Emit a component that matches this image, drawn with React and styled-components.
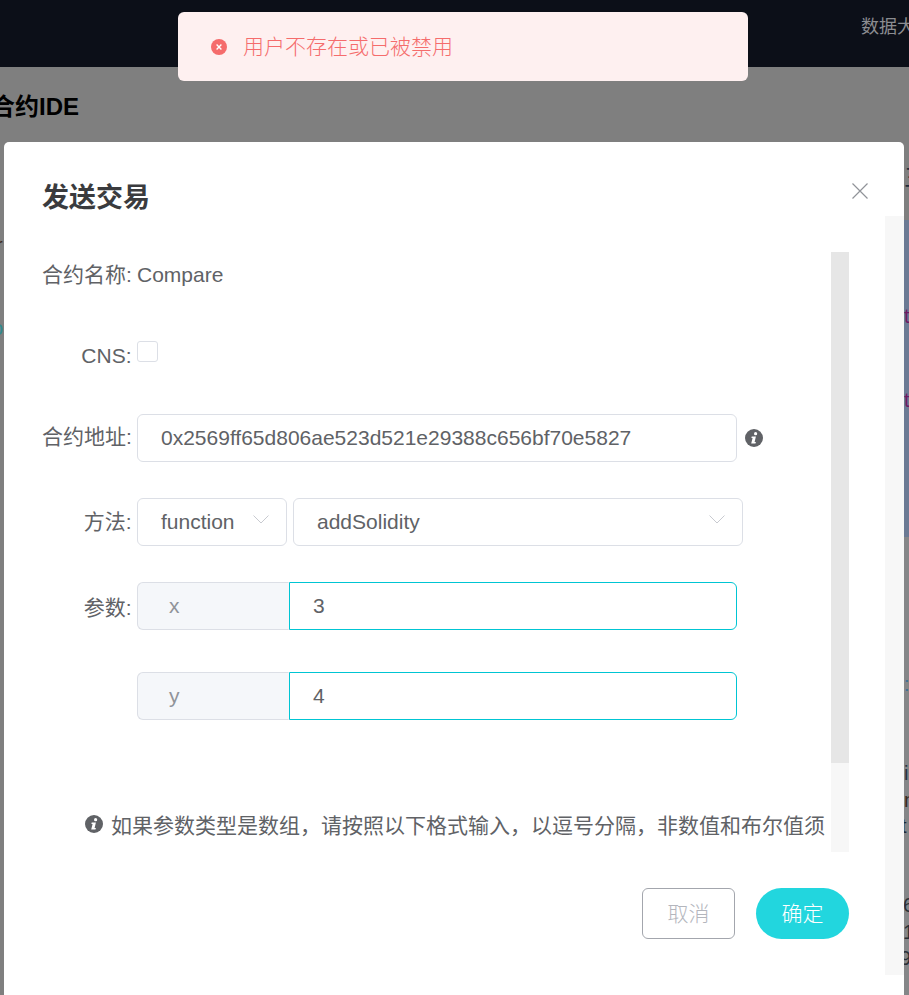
import React from 'react';
import styled, { createGlobalStyle } from 'styled-components';

const FONT = `"Liberation Sans", "Noto Sans CJK SC", sans-serif`;
const THIN_FONT = `"Noto Sans CJK SC", serif`;

const backdropGlyphs = [
  { x: 904, y: 168, text: '三', color: '#1f2a3a', size: 24 },
  { x: 904, y: 306, text: 't', color: '#6d1a63' },
  { x: 904, y: 390, text: 't', color: '#6d1a63' },
  { x: 904, y: 674, text: ':', color: '#3f6d94' },
  { x: 904, y: 763, text: 'i', color: '#26323f' },
  { x: 904, y: 790, text: 'n', color: '#3a2a1e' },
  { x: 901, y: 816, text: 't', color: '#1f2a36' },
  { x: 903, y: 895, text: '6', color: '#2b2f36' },
  { x: 903, y: 922, text: '1', color: '#2b2f36' },
  { x: 900, y: 948, text: '9', color: '#2b2f36' },
  { x: -4, y: 235, text: 'r', color: '#3a2a1e' },
  { x: -8, y: 318, text: 'o', color: '#2f8a8f' },
];

const GlobalStyle = createGlobalStyle`
  html, body {
    margin: 0;
    padding: 0;
    height: 995px;
    overflow: hidden;
    font-family: ${FONT};
  }
  * { box-sizing: border-box; }
`;

const Page = styled.div`
  position: relative;
  width: 909px;
  height: 995px;
  overflow: hidden;
  background: #7f7f7f;
`;

const TopBar = styled.div`
  height: 67px;
  background: #0c0f18;
  padding: 15px 0 0 861px;
  color: #8b8c90;
  font-size: 18px;
  line-height: 24px;
  white-space: nowrap;
  overflow: hidden;
`;

const PageTitle = styled.h1`
  margin: 25px 0 0 -9px;
  font-size: 24px;
  line-height: 30px;
  font-weight: 700;
  color: #000;
  white-space: nowrap;
`;

const BackdropStrip = styled.div`
  position: absolute;
  left: 904px;
  top: ${p => p.$top}px;
  width: 5px;
  height: ${p => p.$height}px;
  background: ${p => p.$color};
`;

const BackdropGlyph = styled.span`
  position: absolute;
  left: ${p => p.$x}px;
  top: ${p => p.$y}px;
  font-size: ${p => p.$size ?? 20}px;
  line-height: 20px;
  color: ${p => p.$color};
`;

const Toast = styled.div`
  position: absolute;
  z-index: 3;
  left: 178px;
  top: 12px;
  width: 570px;
  height: 69px;
  display: flex;
  align-items: center;
  gap: 16px;
  padding-left: 33px;
  background: #fef0f0;
  border-radius: 6px;
  color: #f56c6c;
  font-size: 21px;
  font-weight: 300;
  font-family: ${THIN_FONT};
`;

const ToastText = styled.span`
  margin-bottom: 4px;
`;

const Modal = styled.section`
  position: absolute;
  z-index: 2;
  left: 4px;
  top: 142px;
  width: 900px;
  height: 860px;
  background: #fff;
  border-radius: 5px 5px 0 0;
`;

const ModalHeader = styled.header`
  display: flex;
  justify-content: space-between;
  padding: 38px 33px 0 38px;
  height: 110px;
`;

const ModalTitle = styled.h2`
  margin: 0;
  font-size: 27px;
  line-height: 36px;
  font-weight: 700;
  color: #3a3b3e;
`;

const CloseButton = styled.button`
  width: 22px;
  height: 22px;
  padding: 0;
  border: 0;
  background: none;
  color: #909399;
  display: flex;
  align-items: center;
  justify-content: center;
`;

const OuterTrack = styled.div`
  position: absolute;
  right: 0;
  top: 74px;
  width: 19px;
  height: 759px;
  background: #f7f7f7;
`;

const Body = styled.div`
  position: relative;
  width: 807px;
  height: 600px;
  margin-left: 38px;
  color: #606266;
  font-size: 21px;
`;

const ScrollTrack = styled.div`
  position: absolute;
  left: 789px;
  top: 0;
  width: 18px;
  height: 600px;
  background: #f7f7f7;
`;

const ScrollThumb = styled.div`
  height: 511px;
  background: #e6e6e6;
`;

const Row = styled.div`
  display: flex;
  align-items: center;
  height: 48px;
  margin-bottom: ${p => p.$after}px;
`;

const Label = styled.label`
  flex: none;
  width: 89.5px;
  margin-right: 0.5px;
  margin-top: ${p => p.$shift ?? 0}px;
  text-align: right;
  color: #606266;
  font-size: 21px;
  line-height: 28px;
  white-space: nowrap;
`;

const Value = styled.span`
  margin: 0 0 2px 5px;
  line-height: 28px;
`;

const Checkbox = styled.span`
  display: block;
  width: 21px;
  height: 21px;
  margin: 0 0 12px 5px;
  border: 1px solid #dcdfe6;
  border-radius: 3px;
  background: #fff;
`;

const Field = styled.div`
  flex: none;
  width: ${p => p.$width}px;
  height: 48px;
  margin-left: ${p => p.$left ?? 0}px;
  display: flex;
  align-items: center;
  justify-content: space-between;
  padding: 0 ${p => p.$pr ?? 23}px 0 23px;
  background: ${p => (p.$addon ? '#f5f7fa' : '#fff')};
  color: ${p => (p.$addon ? '#909399' : '#606266')};
  border: 1px solid ${p => (p.$active ? '#00c5d3' : '#dcdfe6')};
  border-radius: ${p => {
    if (p.$addon) return '6px 0 0 6px';
    if (p.$active) return '0 6px 6px 0';
    return '6px';
  }};
  border-right-color: ${p => (p.$addon ? 'transparent' : undefined)};
  font-size: 21px;
  white-space: nowrap;
`;

const AddonText = styled.span`
  padding-left: 8px;
`;

const Spacer = styled.div`
  flex: none;
  width: ${p => p.$width}px;
`;

const InfoIcon = styled.svg`
  flex: none;
  width: 18px;
  height: 18px;
  color: #606266;
  margin-left: ${p => p.$left}px;
`;

const Chevron = styled.svg`
  flex: none;
  width: 16px;
  height: 9px;
  margin-bottom: 6px;
`;

const Notice = styled.div`
  display: flex;
  align-items: center;
  gap: 8px;
  height: 28px;
  padding-left: 43px;
  white-space: nowrap;
  font-size: 21px;
`;

const Footer = styled.footer`
  display: flex;
  justify-content: flex-end;
  gap: 21px;
  margin-top: 36px;
  padding-right: 55px;
`;

const Button = styled.button`
  width: 93px;
  height: 51px;
  padding: 0 0 4px;
  font-family: ${THIN_FONT};
  font-size: 21px;
  font-weight: 300;
  border-radius: ${p => (p.$primary ? '26px' : '6px')};
  border: ${p => (p.$primary ? '0' : '1px solid #a3a6ad')};
  background: ${p => (p.$primary ? '#22d6de' : '#fff')};
  color: ${p => (p.$primary ? '#fff' : '#b4b6bd')};
`;

function Info({ left = 0 }) {
  return (
    <InfoIcon $left={left} viewBox="0 0 18 18">
      <circle cx="9" cy="9" r="9" fill="currentColor" />
      <circle cx="10.6" cy="4.7" r="1.6" fill="#fff" />
      <path d="M6.7 7.6h4.2L9.6 13h1.3l-.4 1.5H6.2l1.4-5.5H6.4z" fill="#fff" />
    </InfoIcon>
  );
}

function Arrow() {
  return (
    <Chevron viewBox="0 0 16 9" fill="none">
      <path d="M.5.5 8 8 15.5.5" stroke="#c8cad0" strokeWidth="1" />
    </Chevron>
  );
}

export default function App() {
  return (
    <>
      <GlobalStyle />
      <Page>
        <TopBar>数据大屏</TopBar>
        <PageTitle>合约IDE</PageTitle>
        <BackdropStrip $top={220} $height={317} $color="#6b7a94" />
        <BackdropStrip $top={537} $height={458} $color="#858688" />
        {backdropGlyphs.map(g => (
          <BackdropGlyph key={`${g.x}-${g.y}`} $x={g.x} $y={g.y} $color={g.color} $size={g.size}>
            {g.text}
          </BackdropGlyph>
        ))}

        <Toast>
          <svg width="16" height="16" viewBox="0 0 16 16">
            <circle cx="8" cy="8" r="8" fill="#f56c6c" />
            <path d="M5.6 5.6l4.8 4.8M10.4 5.6l-4.8 4.8" stroke="#fff" strokeWidth="1.4" />
          </svg>
          <ToastText>用户不存在或已被禁用</ToastText>
        </Toast>

        <Modal>
          <ModalHeader>
            <ModalTitle>发送交易</ModalTitle>
            <CloseButton aria-label="关闭">
              <svg width="16" height="16" viewBox="0 0 16 16" fill="none">
                <path d="M.5.5l15 15M15.5.5l-15 15" stroke="currentColor" strokeWidth="1.2" />
              </svg>
            </CloseButton>
          </ModalHeader>
          <OuterTrack />
          <Body>
            <ScrollTrack>
              <ScrollThumb />
            </ScrollTrack>
            <Row $after={33}>
              <Label $shift={-2}>合约名称:</Label>
              <Value>Compare</Value>
            </Row>
            <Row $after={33}>
              <Label $shift={-2}>CNS:</Label>
              <Checkbox />
            </Row>
            <Row $after={36}>
              <Label $shift={-2}>合约地址:</Label>
              <Field $width={600} $left={5}>0x2569ff65d806ae523d521e29388c656bf70e5827</Field>
              <Info left={8} />
            </Row>
            <Row $after={36}>
              <Label>方法:</Label>
              <Field $width={150} $left={5} $pr={17}>function<Arrow /></Field>
              <Field $width={450} $left={6} $pr={17}>addSolidity<Arrow /></Field>
            </Row>
            <Row $after={42}>
              <Label $shift={4}>参数:</Label>
              <Field $width={152} $left={5} $addon><AddonText>x</AddonText></Field>
              <Field $width={448} $active>3</Field>
            </Row>
            <Row $after={90}>
              <Spacer $width={95} />
              <Field $width={152} $addon><AddonText>y</AddonText></Field>
              <Field $width={448} $active>4</Field>
            </Row>
            <Notice>
              <Info />
              <span>如果参数类型是数组，请按照以下格式输入，以逗号分隔，非数值和布尔值须</span>
            </Notice>
          </Body>
          <Footer>
            <Button>取消</Button>
            <Button $primary>确定</Button>
          </Footer>
        </Modal>
      </Page>
    </>
  );
}
